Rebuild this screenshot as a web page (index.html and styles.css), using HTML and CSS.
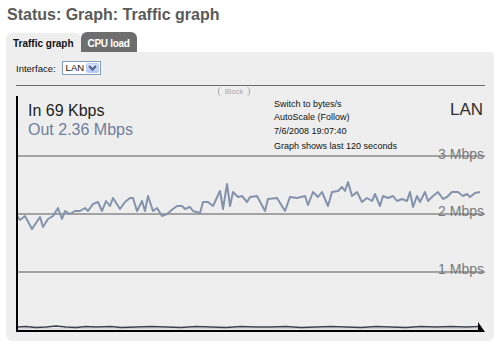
FILE: index.html
```html
<!DOCTYPE html>
<html>
<head>
<meta charset="utf-8">
<link rel="stylesheet" href="styles.css">
</head>
<body>
<h1 class="title">Status: Graph: Traffic graph</h1>
<div class="tabs">
  <span class="tab tab-active">Traffic graph</span>
  <span class="tab tab-off">CPU load</span>
</div>
<div class="panel">
  <div class="iface">
    <span class="iface-label">Interface:</span>
    <span class="select">
      <span class="sel-val">LAN</span>
      <span class="sel-btn"><svg width="9" height="6" viewBox="0 0 9 6"><path d="M1 1 L4.5 4.5 L8 1" fill="none" stroke="#4d6185" stroke-width="2"/></svg></span>
    </span>
  </div>
  <div class="rule"></div>
  <div class="blockrow"><span class="block">Block</span></div>
  <div class="graph">
    <svg class="graph-svg" width="470" height="236" viewBox="0 0 470 236">
      <line x1="2" y1="60" x2="469" y2="60" stroke="#a3a3a3" stroke-width="2"/>
      <line x1="2" y1="118" x2="469" y2="118" stroke="#a3a3a3" stroke-width="2"/>
      <line x1="2" y1="176" x2="469" y2="176" stroke="#a3a3a3" stroke-width="2"/>
      <text x="468" y="63" class="lbl" text-anchor="end">3 Mbps</text>
      <text x="468" y="120" class="lbl" text-anchor="end">2 Mbps</text>
      <text x="468" y="178" class="lbl" text-anchor="end">1 Mbps</text>
      <polyline fill="none" stroke="#8493ad" stroke-width="2" stroke-linejoin="round" points="1,120 4,124 9,120 16,133 24,121 27,131 32,123 37,120 42,112 46,123 49,115 54,118 59,115 64,115 69,112 72,115 77,108 82,106 86,115 90,105 94,110 97,102 104,113 109,106 114,102 117,102 121,115 126,105 129,115 132,100 137,115 141,112 146,120 151,118 157,113 161,110 166,110 169,113 174,111 177,115 184,117 187,106 192,106 197,110 204,95 207,113 211,88 214,110 217,96 222,101 226,100 231,106 234,101 241,100 249,115 252,103 261,102 269,115 274,101 281,102 289,100 292,109 297,96 302,101 306,96 312,110 316,96 322,95 326,91 329,95 332,86 336,100 341,96 346,106 351,102 356,105 359,98 364,110 367,100 372,102 377,100 381,105 386,103 391,105 394,96 397,111 401,100 404,106 409,96 412,105 417,100 422,96 427,103 431,101 436,96 442,96 447,100 451,98 454,101 459,97 464,96"/>
      <polyline fill="none" stroke="#c8ccd4" stroke-width="1" points="2,233 20,232.5 40,233 60,232.5 90,233 120,232.5 160,233 200,232.5 240,233 280,232.5 320,233 360,232.5 400,233 440,232.5 464,233"/>
      <polyline fill="none" stroke="#3a4152" stroke-width="1.6" points="2,231 10,230.5 20,231.5 30,231 40,230 50,231 60,231.5 70,230.5 80,231 95,230.5 105,231.5 120,231 135,230.5 150,231 165,231.5 180,230.5 195,231 210,231.5 225,230.5 240,231 255,231 270,230.5 285,231.5 300,231 315,230.5 330,231 345,231.5 360,230.5 375,231 390,231.5 405,230.5 420,231 435,230.5 450,231 464,230.5"/>
      <line x1="1" y1="0" x2="1" y2="236" stroke="#000" stroke-width="2"/>
      <line x1="0" y1="235" x2="467" y2="235" stroke="#000" stroke-width="2"/>
      <polygon points="462,226 469,236 462,236" fill="#000"/>
    </svg>
    <div class="graph-head">
      <div class="rates">
        <div class="rate-in">In 69 Kbps</div>
        <div class="rate-out">Out 2.36 Mbps</div>
      </div>
      <div class="info">
        <div>Switch to bytes/s</div>
        <div>AutoScale (Follow)</div>
        <div>7/6/2008 19:07:40</div>
        <div class="info-last">Graph shows last 120 seconds</div>
      </div>
      <div class="ifname">LAN</div>
    </div>
  </div>
</div>
</body>
</html>
```
FILE: styles.css
```css
html, body {
  margin: 0;
  padding: 0;
  background: #ffffff;
}
body {
  font-family: "Liberation Sans", Arial, sans-serif;
  width: 500px;
  height: 354px;
  overflow: hidden;
}
.title {
  margin: 0;
  padding: 5px 7px 0;
  font-size: 16px;
  line-height: 20px;
  font-weight: bold;
  color: #5a5a5a;
}
.tabs {
  display: flex;
  align-items: flex-end;
  margin: 7px 0 0 6px;
  height: 20px;
}
.tab {
  display: block;
  white-space: nowrap;
  font-size: 10px;
  font-weight: bold;
  line-height: 13px;
  border-radius: 6px 6px 0 0;
}
.tab-active {
  background: #eeeeee;
  color: #111111;
  padding: 4px 7px 2px 7px;
}
.tab-off {
  background: #6e6e6e;
  color: #ffffff;
  padding: 5px 7px 2px 7px;
  letter-spacing: -0.3px;
}
.panel {
  margin: 0 6px;
  background: #eeeeee;
  border-radius: 0 4px 6px 6px;
  padding: 9px 9px 9px 10px;
}
.iface {
  display: flex;
  align-items: center;
  height: 14px;
  font-size: 9.5px;
  color: #111111;
}
.iface-label {
  margin-right: 6px;
}
.select {
  display: flex;
  align-items: center;
  box-sizing: border-box;
  width: 39px;
  height: 14px;
  border: 1px solid #7f9db9;
  background: #ffffff;
  padding: 0 1px 0 3px;
}
.sel-val {
  flex: 1 1 auto;
  font-size: 9.5px;
  line-height: 12px;
  color: #111111;
}
.sel-btn {
  flex: 0 0 13px;
  display: flex;
  align-items: center;
  justify-content: center;
  box-sizing: border-box;
  width: 13px;
  height: 10px;
  border: 1px solid #b9cbf5;
  border-radius: 2px;
  background: linear-gradient(#d6e2fd, #b4c7f3);
}
.rule {
  margin-top: 10px;
  height: 1px;
  background: #6a6a6a;
}
.blockrow {
  height: 10px;
  padding-top: 1px;
  box-sizing: border-box;
}
.block {
  display: block;
  margin-left: 202px;
  width: 32px;
  height: 9px;
  box-sizing: border-box;
  border-left: 1px solid #aaaaaa;
  border-right: 1px solid #aaaaaa;
  border-radius: 4px;
  font-size: 7.5px;
  line-height: 9px;
  text-align: center;
  color: #a8a8a8;
}
.graph {
  position: relative;
  width: 470px;
  height: 236px;
}
.graph-svg {
  display: block;
}
.lbl {
  font-family: "Liberation Sans", Arial, sans-serif;
  font-size: 14px;
  fill: #7a7a7a;
}
.graph-head {
  position: absolute;
  top: 0;
  left: 0;
  right: 0;
  display: grid;
  grid-template-columns: 258px 1fr auto;
}
.rates {
  padding: 5px 0 0 12px;
  font-size: 16px;
  line-height: 19px;
}
.rate-in {
  color: #1e1e1e;
}
.rate-out {
  color: #6f7f9c;
}
.info {
  padding-top: 2px;
  font-size: 9px;
  line-height: 13.4px;
  color: #111111;
}
.info-last {
  margin-top: 2px;
}
.ifname {
  padding: 4px 3px 0 0;
  font-size: 17px;
  line-height: 20px;
  color: #2e2e2e;
}
```
